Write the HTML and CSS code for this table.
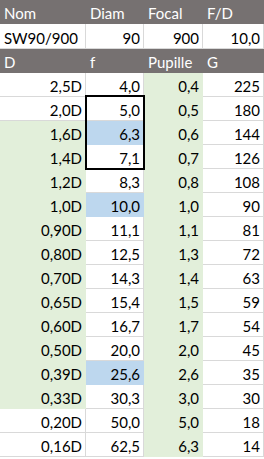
FILE: index.html
```html
<!DOCTYPE html>
<html lang="fr">
<head>
<meta charset="utf-8">
<title>SW90/900</title>
<link rel="stylesheet" href="styles.css">
</head>
<body>
<div class="sheet">
  <div class="c h">Nom</div><div class="c h">Diam</div><div class="c h">Focal</div><div class="c h">F/D</div>
  <div class="c r2">SW90/900</div><div class="c n r2">90</div><div class="c n r2">900</div><div class="c n r2">10,0</div>
  <div class="c h">D</div><div class="c h">f</div><div class="c h">Pupille</div><div class="c h">G</div>

  <div class="c n">2,5D</div><div class="c n">4,0</div><div class="c n g">0,4</div><div class="c n">225</div>
  <div class="c n">2,0D</div><div class="c n">5,0</div><div class="c n g">0,5</div><div class="c n">180</div>
  <div class="c n g">1,6D</div><div class="c n b">6,3</div><div class="c n g">0,6</div><div class="c n">144</div>
  <div class="c n g">1,4D</div><div class="c n">7,1</div><div class="c n g">0,7</div><div class="c n">126</div>
  <div class="c n g">1,2D</div><div class="c n">8,3</div><div class="c n g">0,8</div><div class="c n">108</div>
  <div class="c n g">1,0D</div><div class="c n b">10,0</div><div class="c n g">1,0</div><div class="c n">90</div>
  <div class="c n g">0,90D</div><div class="c n">11,1</div><div class="c n g">1,1</div><div class="c n">81</div>
  <div class="c n g">0,80D</div><div class="c n">12,5</div><div class="c n g">1,3</div><div class="c n">72</div>
  <div class="c n g">0,70D</div><div class="c n">14,3</div><div class="c n g">1,4</div><div class="c n">63</div>
  <div class="c n g">0,65D</div><div class="c n">15,4</div><div class="c n g">1,5</div><div class="c n">59</div>
  <div class="c n g">0,60D</div><div class="c n">16,7</div><div class="c n g">1,7</div><div class="c n">54</div>
  <div class="c n g">0,50D</div><div class="c n">20,0</div><div class="c n g">2,0</div><div class="c n">45</div>
  <div class="c n g">0,39D</div><div class="c n b">25,6</div><div class="c n g">2,6</div><div class="c n">35</div>
  <div class="c n g">0,33D</div><div class="c n">30,3</div><div class="c n g">3,0</div><div class="c n">30</div>
  <div class="c n">0,20D</div><div class="c n">50,0</div><div class="c n g">5,0</div><div class="c n">18</div>
  <div class="c n">0,16D</div><div class="c n">62,5</div><div class="c n g">6,3</div><div class="c n">14</div>

  <div class="sel"></div>
</div>
</body>
</html>
```
FILE: styles.css
```css
html, body {
  margin: 0;
  padding: 0;
  background: #ffffff;
}

.sheet {
  position: relative;
  display: grid;
  grid-template-columns: 86px 58px 59px 61px;
  grid-template-rows: 24px 25px 24px repeat(16, 24px);
  width: 264px;
  font-family: Lato, "Open Sans", sans-serif;
  font-size: 15px;
  color: #000;
}

.c {
  box-sizing: border-box;
  display: flex;
  align-items: flex-end;
  justify-content: flex-start;
  padding: 0 3px 1px 4px;
  line-height: 18px;
  border-right: 1px solid #d9d9d9;
  border-bottom: 1px solid #d9d9d9;
  white-space: nowrap;
  overflow: hidden;
}

.n {
  justify-content: flex-end;
}

.h {
  background: #767171;
  color: #ffffff;
  border-color: #767171;
}

.g {
  background: #e2efda;
  border-color: #e2efda;
}

.b {
  background: #bdd7ee;
  border-color: #bdd7ee;
}

/* selection rectangle drawn over the f cells 5,0 – 7,1 */
.sel {
  position: absolute;
  grid-column: 2 / 3;
  grid-row: 5 / 8;
  top: -2px;
  left: -1px;
  right: -1px;
  bottom: -1px;
  border: 2px solid #000;
  pointer-events: none;
}
```
